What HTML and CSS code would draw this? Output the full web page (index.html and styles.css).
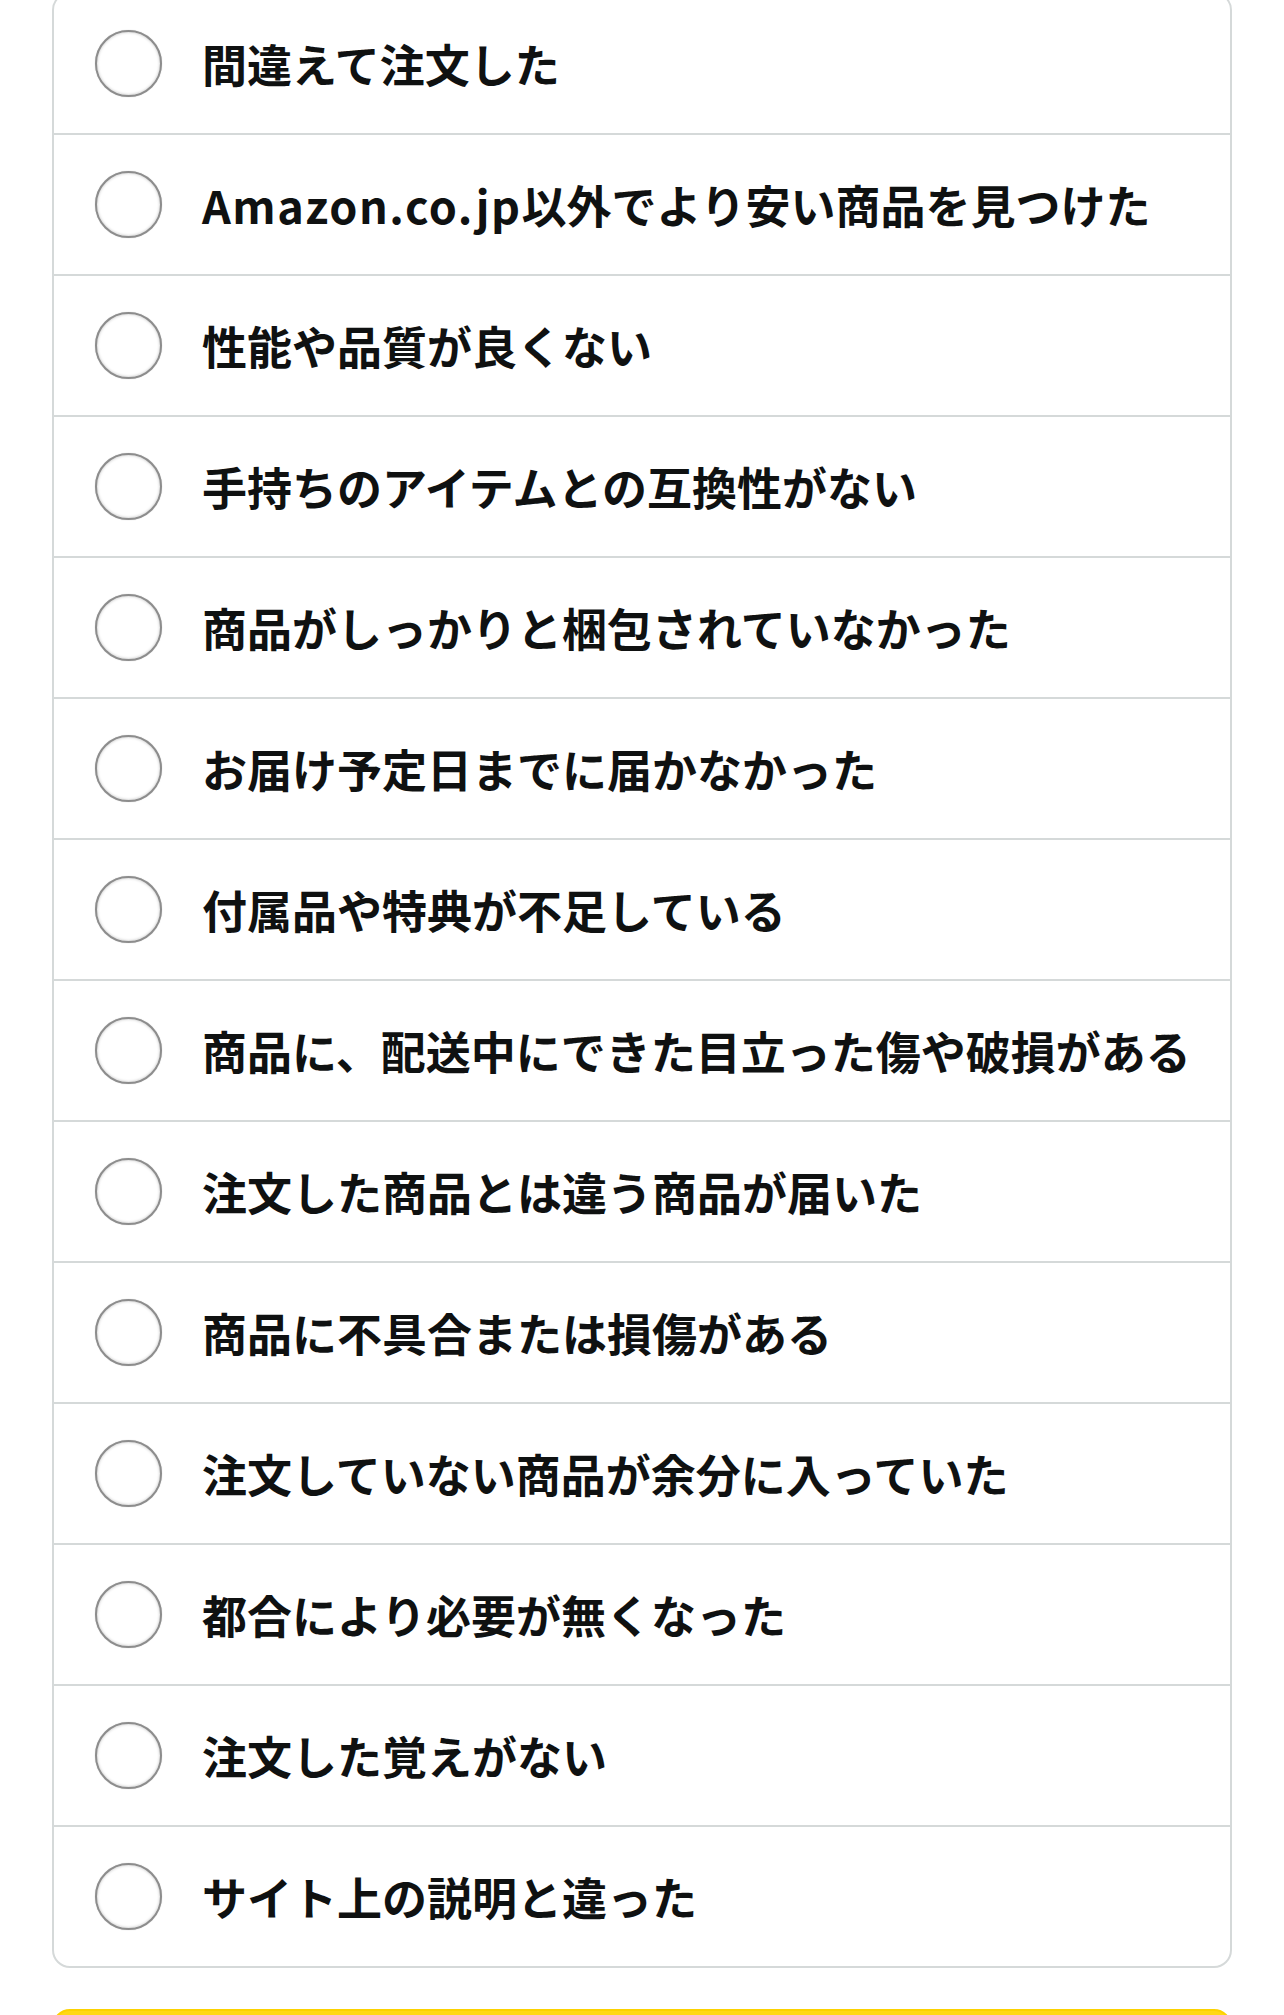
FILE: index.html
```html
<!DOCTYPE html>
<html lang="ja">
<head>
	<meta charset="UTF-8">
	<title>返品の理由</title>

	<link rel="stylesheet" href="styles.css">
</head>
<body>
	<div class="reasons">
		<label class="reason"><span class="radio"></span><span class="text">間違えて注文した</span></label>
		<label class="reason"><span class="radio"></span><span class="text"><span class="latin">Amazon.co.jp</span>以外でより安い商品を見つけた</span></label>
		<label class="reason"><span class="radio"></span><span class="text">性能や品質が良くない</span></label>
		<label class="reason"><span class="radio"></span><span class="text">手持ちのアイテムとの互換性がない</span></label>
		<label class="reason"><span class="radio"></span><span class="text">商品がしっかりと梱包されていなかった</span></label>
		<label class="reason"><span class="radio"></span><span class="text">お届け予定日までに届かなかった</span></label>
		<label class="reason"><span class="radio"></span><span class="text">付属品や特典が不足している</span></label>
		<label class="reason"><span class="radio"></span><span class="text">商品に、配送中にできた目立った傷や破損がある</span></label>
		<label class="reason"><span class="radio"></span><span class="text">注文した商品とは違う商品が届いた</span></label>
		<label class="reason"><span class="radio"></span><span class="text">商品に不具合または損傷がある</span></label>
		<label class="reason"><span class="radio"></span><span class="text">注文していない商品が余分に入っていた</span></label>
		<label class="reason"><span class="radio"></span><span class="text">都合により必要が無くなった</span></label>
		<label class="reason"><span class="radio"></span><span class="text">注文した覚えがない</span></label>
		<label class="reason"><span class="radio"></span><span class="text">サイト上の説明と違った</span></label>
	</div>
	<div class="next-btn"></div>
</body>
</html>
```

FILE: styles.css
```css
*{
	margin:0;
	padding:0;
	box-sizing:border-box;
}
body{
	background:#fff;
	font-family:"Noto Sans CJK JP","Noto Sans",sans-serif;
	color:#0f1111;
}
.reasons{
	margin:-8px 52px 0;
	border:2px solid #d5d9d9;
	border-radius:18px;
	overflow:hidden;
}
.reason{
	display:flex;
	align-items:center;
	height:139px;
	padding-left:41px;
	gap:40px;
}
.reason + .reason{
	height:141px;
	border-top:2px solid #d5d9d9;
}
.radio{
	flex:none;
	width:67px;
	height:67px;
	border:2px solid #8d8d8d;
	border-radius:50%;
	box-shadow:inset 0 0 3px rgba(0,0,0,0.25), 0 0 1px rgba(0,0,0,0.3);
	background:#fff;
}
.text{
	font-size:45px;
	font-weight:700;
	line-height:1.2;
	white-space:nowrap;
}
.latin{
	letter-spacing:1.5px;
}
.next-btn{
	margin:41px 52px 0;
	height:80px;
	background:#ffd814;
	border:2px solid #fcd200;
	border-radius:18px;
}
```
